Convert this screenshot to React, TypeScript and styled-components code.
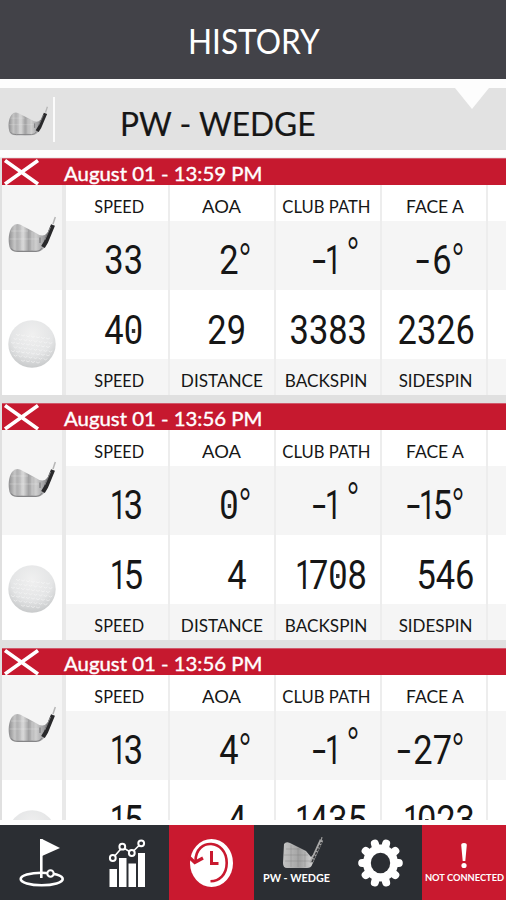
import React from "react";
import styled, { createGlobalStyle } from "styled-components";

const GlobalStyle = createGlobalStyle`
  html, body { margin: 0; padding: 0; background: #fff; }
  * { box-sizing: border-box; }
`;

const Screen = styled.div`
  width: 506px;
  height: 900px;
  display: flex;
  flex-direction: column;
  overflow: hidden;
  background: #fdfdfd;
  color: #161616;
  font-family: Lato, "Liberation Sans", sans-serif;
`;

const TitleBar = styled.header`
  flex: none;
  height: 79px;
  display: flex;
  align-items: center;
  justify-content: center;
  padding-top: 3px;
  background: #424248;
  color: #fff;
`;

const Title = styled.h1`
  margin: 0 0 0 2px;
  font-size: 34px;
  line-height: 40px;
  font-weight: 400;
  white-space: nowrap;
  transform: scaleX(0.93);
`;

const ClubBar = styled.section`
  flex: none;
  height: 62px;
  margin-top: 9px;
  display: flex;
  align-items: center;
  background: #e2e2e2;
  position: relative;
`;

const ClubThumb = styled.div`
  width: 55px;
  height: 45px;
  padding: 9px 0 0 8px;
  border-right: 2px solid #fbfbfb;
`;

const ClubName = styled.h2`
  margin: 8px 0 0 65px;
  font-size: 33.5px;
  line-height: 40px;
  font-weight: 400;
  white-space: nowrap;
  -webkit-text-stroke: 0.2px currentColor;
  transform: scaleX(0.945);
  transform-origin: left;
`;

const Notch = styled.svg`
  position: absolute;
  top: 0;
  right: 17px;
`;

const List = styled.main`
  flex: none;
  height: 663px;
  margin-top: 7px;
  overflow: hidden;
  border-top: 1px solid #efefef;
`;

const Card = styled.article`
  height: 245px;
  padding-left: 2px;
  background: #e0e0e0;
`;

const CardHeader = styled.header`
  height: 27px;
  display: flex;
  align-items: center;
  border-top: 1px solid #d0586a;
  background: #c6192f;
  color: #fff;
  overflow: hidden;
`;

const DeleteMark = styled.svg`
  flex: none;
  margin-left: 1px;
`;

const Stamp = styled.time`
  margin: 1px 0 0 23px;
  font-size: 20px;
  line-height: 26px;
  white-space: nowrap;
  -webkit-text-stroke: 0.4px currentColor;
  transform: scaleX(1.018);
  transform-origin: left;
`;

const CardBody = styled.div`
  height: 210px;
  display: grid;
  grid-template-columns: 60px 106px 106px 106px 106px 20px;
  grid-template-rows: 36px 69px 69px 36px;
  background: #fff;
`;

const Kinds = styled.div`
  grid-row: 1 / -1;
  display: grid;
  grid-template-rows: 105px 105px;
`;

const Kind = styled.div<{ $tint?: boolean }>`
  display: flex;
  align-items: flex-start;
  padding: ${(p) => (p.$tint ? "31px 0 0 6px" : "30px 0 0 6px")};
  background: ${(p) => (p.$tint ? "#f5f5f5" : "#ffffff")};
`;

const Cell = styled.div<{ $tint?: boolean; $first?: boolean }>`
  display: flex;
  border-left: ${(p) => (p.$first ? "4px solid #e9e9e9" : "2px solid #ededed")};
  background: ${(p) => (p.$tint ? "#f5f5f5" : "#ffffff")};
  min-width: 0;
`;

const LabelCell = styled(Cell)`
  align-items: center;
  justify-content: center;
  padding-top: 7px;
`;

const Label = styled.span<{ $scale: number; $shift: number }>`
  font-size: 17.5px;
  line-height: 24px;
  white-space: nowrap;
  transform: translateX(${(p) => p.$shift}px) scaleX(${(p) => p.$scale});
`;

const ValueCell = styled(Cell)<{ $end: number; $top: number }>`
  justify-content: flex-end;
  padding: ${(p) => p.$top}px ${(p) => p.$end}px 0 0;
`;

const Digits = styled.span`
  font-family: Roboto, "Liberation Sans", sans-serif;
  font-size: 40px;
  line-height: 46px;
  white-space: nowrap;
  transform: scaleX(0.86);
  transform-origin: right;
`;

const Zero = styled.span`
  position: relative;
  &::after {
    content: "";
    position: absolute;
    left: 9.5px;
    top: 22px;
    width: 4px;
    height: 4px;
    background: #333;
  }
`;

const One = styled.span`
  display: inline-block;
  margin: 0 -5px 0 -6px;
  transform: scaleX(0.85);
`;

const Minus = styled.span`
  display: inline-block;
  margin-right: 3px;
  transform: scaleX(1.45);
  transform-origin: right;
`;

const Degree = styled.sup<{ $gap: number; $lift: number }>`
  width: 11px;
  margin: ${(p) => 2 - p.$lift}px 0 0 ${(p) => p.$gap}px;
  font-family: Roboto, "Liberation Sans", sans-serif;
  font-size: 37px;
  font-weight: 300;
  line-height: 40px;
  transform: translate(-1px, 4px) scaleY(1.3);
`;

const NavBar = styled.nav`
  flex: none;
  height: 75px;
  margin-top: 5px;
  display: grid;
  grid-template-columns: 84px 85px 85px 84px 84px 84px;
  background: #2b2e33;
`;

const NavItem = styled.button<{ $red?: boolean }>`
  border: 0;
  padding: 0;
  min-width: 0;
  display: flex;
  flex-direction: column;
  align-items: center;
  overflow: hidden;
  background: ${(p) => (p.$red ? "#c9192f" : "transparent")};
  color: #fff;
`;

const NavCaption = styled.span<{ $size: number }>`
  font: 700 ${(p) => p.$size}px/14px Lato, "Liberation Sans", sans-serif;
  padding-left: 1px;
  white-space: nowrap;
`;

function ClubIcon({ width, height, id }: { width: number; height: number; id: string }) {
  return (
    <svg width={width} height={height} viewBox="0 0 48 37" preserveAspectRatio="none">
      <defs>
        <linearGradient id={id} x1="0" x2="1">
          <stop offset="0" stopColor="#8d8d8f" />
          <stop offset=".12" stopColor="#bdbdbd" />
          <stop offset=".22" stopColor="#b2b2b3" />
          <stop offset=".36" stopColor="#d6d6d6" />
          <stop offset=".48" stopColor="#a2a2a3" />
          <stop offset=".66" stopColor="#cfcfcf" />
          <stop offset=".85" stopColor="#a0a0a2" />
          <stop offset="1" stopColor="#77777a" />
        </linearGradient>
      </defs>
      <path d="M4 11Q7 7 12 8.500L28 17Q35 22 39 17L42 19 36 32Q33 36 28 36H9Q3 36 1.500 31C0 24 .5 16 4 11Z" fill={`url(#${id})`} />
      <path d="M3 15H20M1.500 23H31M7 9V34M14 10V34M24 16V34" stroke="#eee" strokeOpacity=".3" strokeWidth="1" />
      <path d="M3 32.500Q5 35.300 10 35.300H28Q32 35.300 34 32" stroke="#858587" strokeWidth="1.200" fill="none" />
      <path d="M32 21.500V27" stroke="#707073" strokeWidth="1" />
      <path d="M35 31L38 26 45 9" stroke="#29292b" strokeWidth="4.200" fill="none" strokeLinejoin="round" />
      <path d="M36.800 24L42.500 11" stroke="#8d8d8f" strokeWidth=".9" />
      <path d="M45 8L47.300 1" stroke="#b5b5b5" strokeWidth="1.500" />
    </svg>
  );
}

function BallIcon({ id }: { id: string }) {
  const dimples: React.ReactNode[] = [];
  for (let r = 0; r < 7; r++) {
    for (let c = 0; c < 9; c++) {
      const x = 5 + c * 5 + (r % 2) * 2.5;
      const y = 16 + r * 4.2 + (x - 24) * 0.12;
      if ((x - 24) ** 2 + (y - 24) ** 2 < 420) {
        dimples.push(<path key={`${r}-${c}`} d={`M${x - 1.9} ${y}q1.900 2.400 3.800 0`} />);
      }
    }
  }
  return (
    <svg width="48" height="48" viewBox="0 0 48 48">
      <defs>
        <radialGradient id={id} cx=".5" cy=".3" r=".72">
          <stop offset="0" stopColor="#f0f0f0" />
          <stop offset=".6" stopColor="#e4e5e6" />
          <stop offset="1" stopColor="#c6c8c9" />
        </radialGradient>
      </defs>
      <circle cx="24" cy="24" r="23.700" fill={`url(#${id})`} />
      <g fill="none" stroke="#fafafa" strokeWidth=".9" opacity=".6">{dimples}</g>
    </svg>
  );
}

type Slot = { end: number; degree?: { gap: number; lift: number } };

function glyph(ch: string, i: number) {
  if (ch === "0") return <Zero key={i}>0</Zero>;
  if (ch === "1") return <One key={i}>1</One>;
  if (ch === "-") return <Minus key={i}>-</Minus>;
  return ch;
}

function Value({ text, slot }: { text: string; slot: Slot }) {
  return (
    <>
      <Digits>{text.split("").map(glyph)}</Digits>
      {slot.degree && (
        <Degree $gap={slot.degree.gap} $lift={slot.degree.lift}>°</Degree>
      )}
    </>
  );
}

const topLabels = [
  { text: "SPEED", scale: 0.93, shift: 2.5 },
  { text: "AOA", scale: 1.05, shift: 0 },
  { text: "CLUB PATH", scale: 0.95, shift: -2 },
  { text: "FACE A", scale: 1, shift: 1 },
];

const bottomLabels = [
  { text: "SPEED", scale: 0.93, shift: 2.5 },
  { text: "DISTANCE", scale: 0.98, shift: 0 },
  { text: "BACKSPIN", scale: 0.98, shift: -2 },
  { text: "SIDESPIN", scale: 0.97, shift: 1.5 },
];

const clubSlots: Slot[] = [
  { end: 25 },
  { end: 24, degree: { gap: 1, lift: 0 } },
  { end: 22, degree: { gap: 8, lift: 5 } },
  { end: 23, degree: { gap: 0, lift: 0 } },
];

const ballSlots: Slot[] = [{ end: 25 }, { end: 28 }, { end: 13 }, { end: 11.5 }];

const shots = [
  { time: "August 01 - 13:59 PM", club: ["33", "2", "-1", "-6"], ball: ["40", "29", "3383", "2326"] },
  { time: "August 01 - 13:56 PM", club: ["13", "0", "-1", "-15"], ball: ["15", "4", "1708", "546"] },
  { time: "August 01 - 13:56 PM", club: ["13", "4", "-1", "-27"], ball: ["15", "4", "1435", "1023"] },
];

function Shot({ shot, index }: { shot: (typeof shots)[number]; index: number }) {
  return (
    <Card>
      <CardHeader>
        <DeleteMark width="38" height="26" viewBox="0 0 38 26">
          <path d="M2 1.500L35 25M35 1.500L2 25" stroke="#fff" strokeWidth="3.600" />
        </DeleteMark>
        <Stamp>{shot.time}</Stamp>
      </CardHeader>
      <CardBody>
        <Kinds>
          <Kind $tint><ClubIcon width={48} height={37} id={`club-${index}`} /></Kind>
          <Kind><BallIcon id={`ball-${index}`} /></Kind>
        </Kinds>
        {topLabels.map((l, i) => (
          <LabelCell key={l.text} $first={i === 0}>
            <Label $scale={l.scale} $shift={l.shift}>{l.text}</Label>
          </LabelCell>
        ))}
        <Cell />
        {shot.club.map((text, i) => (
          <ValueCell key={i} $tint $first={i === 0} $end={clubSlots[i].end} $top={16.5}>
            <Value text={text} slot={clubSlots[i]} />
          </ValueCell>
        ))}
        <Cell $tint />
        {shot.ball.map((text, i) => (
          <ValueCell key={i} $first={i === 0} $end={ballSlots[i].end} $top={18}>
            <Value text={text} slot={ballSlots[i]} />
          </ValueCell>
        ))}
        <Cell />
        {bottomLabels.map((l, i) => (
          <LabelCell key={l.text} $tint $first={i === 0}>
            <Label $scale={l.scale} $shift={l.shift}>{l.text}</Label>
          </LabelCell>
        ))}
        <Cell $tint />
      </CardBody>
    </Card>
  );
}

function FlagIcon() {
  return (
    <svg width="84" height="75" viewBox="0 0 84 75" fill="none" stroke="#fff">
      <path d="M41.300 53V14" strokeWidth="2.600" />
      <path d="M42 14L60 23 42 31Z" fill="#fff" stroke="none" />
      <ellipse cx="41.700" cy="54" rx="21" ry="6.300" strokeWidth="2.600" />
      <circle cx="50.500" cy="48.500" r="3.200" fill="#2b2e33" strokeWidth="2.100" />
    </svg>
  );
}

function StatsIcon() {
  return (
    <svg width="85" height="75" viewBox="0 0 85 75" fill="none" stroke="#fff">
      <path d="M25.500 44h7.500v18h-7.500zM35 33h7.500v29H35zM44.500 38.500h7.500v23.500h-7.500zM54 28h7v34h-7z" fill="#fff" stroke="none" />
      <path d="M29 33L38.500 22 47.500 28 57 18.500" strokeWidth="1.600" />
      <g fill="#2b2e33" strokeWidth="2">
        <circle cx="28.800" cy="33" r="2.900" />
        <circle cx="38.300" cy="21.700" r="2.900" />
        <circle cx="47.800" cy="28" r="2.900" />
        <circle cx="57.200" cy="18.300" r="2.900" />
      </g>
    </svg>
  );
}

function HistoryIcon() {
  return (
    <svg width="85" height="75" viewBox="0 0 85 75" fill="none">
      <ellipse cx="42.500" cy="38" rx="21.500" ry="24" fill="#fff" />
      <g stroke="#c9192f">
        <path d="M26.500 36C27 12 57.700 14 57.700 38 57.700 50 50 56 41.500 56.300" strokeWidth="2.600" />
        <path d="M20 32L25.800 37.500 34 33" strokeWidth="3.200" />
        <path d="M42.500 26V38.500H49.500" strokeWidth="3" />
      </g>
    </svg>
  );
}

const teeth = Array.from({ length: 10 }, (_, i) => i * 36 * (Math.PI / 180));

function GearIcon() {
  return (
    <svg width="84" height="75" viewBox="0 0 84 75">
      <g fill="#fff" stroke="#fff">
        {teeth.map((a) => (
          <path
            key={a}
            d={`M42.500 38L${42.5 + 18.3 * Math.cos(a)} ${38 + 20.5 * Math.sin(a)}`}
            strokeWidth="8"
            strokeLinecap="round"
          />
        ))}
        <ellipse cx="42.500" cy="38" rx="17.500" ry="18.500" stroke="none" />
      </g>
      <ellipse cx="42.500" cy="38" rx="9.700" ry="10.300" fill="#2b2e33" />
    </svg>
  );
}

const NavClub = styled.div`
  height: 46px;
  padding: 12px 0 0 14px;
`;

const Alert = styled.svg`
  flex: none;
`;

function NavClubIcon() {
  return (
    <svg width="42" height="32" viewBox="0 0 42 32">
      <defs>
        <linearGradient id="nav-club" x1="0" x2="1">
          <stop offset="0" stopColor="#c3c3c3" />
          <stop offset=".5" stopColor="#a2a2a2" />
          <stop offset="1" stopColor="#e3e3e3" />
        </linearGradient>
      </defs>
      <path d="M2 7Q4 4 8 6L24 14 29 20 35 14 30 28Q29 31 25 31H5Q1 31 1 26Z" fill="url(#nav-club)" />
      <path d="M4 12H18M2 18H26M3 24H28M9 8V30M16 11V30M23 15V30" stroke="#777" strokeOpacity=".35" />
      <path d="M29 26L39.500 3" stroke="#aaa" strokeWidth="3.600" />
      <path d="M30 25L39.500 5" stroke="#37383b" strokeWidth="1.600" strokeDasharray="3 1" />
      <path d="M39 4L40 0" stroke="#999" strokeWidth="1.200" />
    </svg>
  );
}

export default function App() {
  return (
    <Screen>
      <GlobalStyle />
      <TitleBar><Title>HISTORY</Title></TitleBar>
      <ClubBar>
        <ClubThumb><ClubIcon width={40} height={30} id="club-current" /></ClubThumb>
        <ClubName>PW - WEDGE</ClubName>
        <Notch width="34" height="21" viewBox="0 0 34 21">
          <path d="M0 0H34L17 21Z" fill="#fdfdfd" />
        </Notch>
      </ClubBar>
      <List>
        {shots.map((shot, i) => <Shot key={i} shot={shot} index={i} />)}
      </List>
      <NavBar>
        <NavItem><FlagIcon /></NavItem>
        <NavItem><StatsIcon /></NavItem>
        <NavItem $red><HistoryIcon /></NavItem>
        <NavItem>
          <NavClub><NavClubIcon /></NavClub>
          <NavCaption $size={10.8}>PW - WEDGE</NavCaption>
        </NavItem>
        <NavItem><GearIcon /></NavItem>
        <NavItem $red>
          <Alert width="12" height="46" viewBox="0 0 12 46">
            <path d="M3.200 20Q3.200 18 6 18T8.800 20L7.300 36H4.700Z" fill="#fff" />
            <circle cx="6" cy="40.500" r="2.600" fill="#fff" />
          </Alert>
          <NavCaption $size={9.3}>NOT CONNECTED</NavCaption>
        </NavItem>
      </NavBar>
    </Screen>
  );
}
